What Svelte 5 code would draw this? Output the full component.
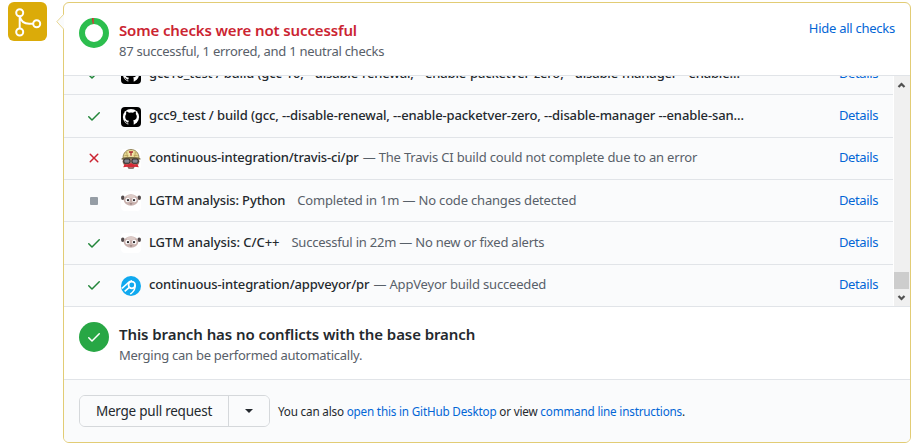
<script>
  const rows = [
    { state: 'ok', icon: 'github', title: 'gcc10_test / build (gcc-10, --disable-renewal, --enable-packetver-zero, --disable-manager --enable…', desc: '', cls: 'a' },
    { state: 'ok', icon: 'github', title: 'gcc9_test / build (gcc, --disable-renewal, --enable-packetver-zero, --disable-manager --enable-san…', desc: '', cls: 'b' },
    { state: 'bad', icon: 'travis', title: 'continuous-integration/travis-ci/pr', desc: '— The Travis CI build could not complete due to an error', cls: 'c' },
    { state: 'neutral', icon: 'lgtm', title: 'LGTM analysis: Python', desc: 'Completed in 1m — No code changes detected', cls: 'd' },
    { state: 'ok', icon: 'lgtm', title: 'LGTM analysis: C/C++', desc: 'Successful in 22m — No new or fixed alerts', cls: 'e' },
    { state: 'ok', icon: 'appveyor', title: 'continuous-integration/appveyor/pr', desc: '— AppVeyor build succeeded', cls: 'f' }
  ];
</script>

{#snippet check()}
  <svg width="16" height="16" viewBox="0 0 16 16"><path fill="currentColor" fill-rule="evenodd" d="M13.78 4.22a.75.75 0 010 1.06l-7.25 7.25a.75.75 0 01-1.06 0L2.22 9.28a.75.75 0 011.06-1.06L6 10.94l6.72-6.72a.75.75 0 011.06 0z" /></svg>
{/snippet}

{#snippet avatar(kind)}
  <svg class="avatar" width="20" height="20" viewBox="0 0 20 20">
    {#if kind === 'github'}
      <rect width="20" height="20" rx="4" fill="#000" />
      <circle cx="10" cy="10" r="8.1" fill="#fff" />
      <path d="M5.3 4.6c1.2 0 2.1.7 2.6 1.1a8 8 0 014.2 0c.5-.4 1.4-1.1 2.6-1.1.4 1 .3 1.8.1 2.3.7.8 1 1.600 1 2.600 0 2.700-1.600 3.600-3.700 3.900.4.4.6 1 .6 1.600v3H7.300v-1.700c-2 .4-2.500-.8-3.200-1.700-.3-.4-.6-.6-.9-.8 1.200-.3 1.800.6 2.300 1.200.5.6 1.100.6 1.900.3 0-.7.3-1.300.6-1.600-2.300-.3-3.800-1.300-3.800-4 0-1.100.4-2 1-2.700-.2-.6-.2-1.500.1-2.400z" fill="#000" />
    {:else if kind === 'travis'}
      <rect width="20" height="20" rx="3" fill="#fff" />
      <ellipse cx="10" cy="12.500" rx="8.500" ry="6" fill="#a98c78" />
      <path d="M2 9C2 4 5.500 .5 10 .5S18 4 18 9z" fill="#e3d590" stroke="#7d7041" stroke-width=".8" />
      <path d="M3.500 6.500h13M5.500 3l1 5M14.500 3l-1 5" stroke="#b19b54" stroke-width=".7" />
      <rect x="7.400" y="1.800" width="5.200" height="5.600" rx="1" fill="#f4e8aa" />
      <path d="M8 3h4M10 3v3.700" stroke="#a82a31" stroke-width="1.300" />
      <path d="M.6 9.200q9.400-2.400 18.800 0v1.500q-9.400-2-18.800 0z" fill="#756946" />
      <rect x="2.800" y="10" width="6.200" height="4.300" rx="1.500" fill="#858992" stroke="#302c2c" stroke-width="1.100" />
      <rect x="11" y="10" width="6.200" height="4.300" rx="1.500" fill="#858992" stroke="#302c2c" stroke-width="1.100" />
      <path d="M2.200 18.300l1.500-3.200q3.200 1.300 6.300-1 3.100 2.300 6.300 1l1.500 3.200-4-.6-1.500.8H7.700l-1.500-.8z" fill="#d52a36" />
      <path d="M6.500 18q3.500 1.500 7 0l-1 1.700h-5z" fill="#694f48" />
    {:else if kind === 'lgtm'}
      <rect width="20" height="20" rx="4" fill="#fff" />
      <ellipse cx="1.800" cy="6.800" rx="1.800" ry="2.200" fill="#534a4b" />
      <ellipse cx="18.200" cy="6.800" rx="1.800" ry="2.200" fill="#534a4b" />
      <ellipse cx="10" cy="9" rx="7.300" ry="5.800" fill="#c9b2ae" />
      <ellipse cx="10" cy="5.500" rx="4.500" ry="1.700" fill="#ddcbc7" />
      <circle cx="6.700" cy="9" r="2.300" fill="#fff" />
      <circle cx="13.300" cy="9" r="2.300" fill="#fff" />
      <circle cx="7" cy="9.100" r="1.200" fill="#2e292c" />
      <circle cx="13" cy="9.100" r="1.200" fill="#2e292c" />
      <path d="M8.500 12.600h3l-1.500 1.200z" fill="#806b69" />
    {:else}
      <circle cx="10" cy="10" r="10" fill="#10a9ef" />
      <circle cx="10.800" cy="9" r="3.300" fill="none" stroke="#fff" stroke-width="1.700" />
      <path d="M1 12.300L5.800 8C7.500 5.800 9 4.700 11 4.700M8.300 11.300L3.700 15.300M14 9c.6 3.700-1.300 6.700-4.700 9.200" fill="none" stroke="#fff" stroke-width="1.600" />
    {/if}
  </svg>
{/snippet}

<div class="page">
  <div class="badge">
    <svg width="39" height="39" viewBox="0 0 39 39" fill="none" stroke="#fff" stroke-width="2">
      <circle cx="11.700" cy="10.700" r="3.500" /><circle cx="11.700" cy="30" r="3.500" /><circle cx="28.700" cy="21.700" r="3.500" />
      <path d="M11.700 14.200v12.300M11.700 14.200c1.200 5 5 7.500 9.500 7.500h4" />
    </svg>
  </div>
  <div class="card">
    <svg class="notch" width="8" height="16" viewBox="0 0 8 16"><path d="M8 0L.8 7.700 8 15.500" fill="#fafbfc" stroke="#e9d793" /></svg>
    <section class="head">
      <svg class="donut" width="30" height="30" viewBox="0 0 30 30">
        <circle cx="15" cy="15" r="12" fill="none" stroke="#2cbe4e" stroke-width="6" />
        <path d="M12.900 .15L13.800 6.100 15 6V0z" fill="#a3804a" /><path d="M13 .15L13.900 6.100 14.500 6V0z" fill="#cb2431" />
      </svg>
      <div class="copy">
        <h3 class="red">Some checks were not successful</h3>
        <p>87 successful, 1 errored, and 1 neutral checks</p>
      </div>
      <a class="hide" href="#top">Hide all checks</a>
    </section>
    <section class="checks">
      <div class="list">
        {#each rows as r}
          <div class="row {r.cls}">
            <span class="state {r.state}">
              {#if r.state === 'ok'}{@render check()}
              {:else if r.state === 'bad'}<svg width="16" height="16" viewBox="0 0 16 16"><path fill="currentColor" d="M3.720 3.720a.75.75 0 011.060 0L8 6.940l3.220-3.220a.75.75 0 111.060 1.060L9.060 8l3.220 3.220a.75.75 0 11-1.060 1.060L8 9.060l-3.220 3.220a.75.75 0 01-1.060-1.060L6.940 8 3.720 4.780a.75.75 0 010-1.060z" /></svg>
              {:else}<i></i>{/if}
            </span>
            {@render avatar(r.icon)}
            <strong>{r.title}</strong>
            {#if r.desc}<span class="desc">{r.desc}</span>{/if}
            <a class="details" href="#details">Details</a>
          </div>
        {/each}
      </div>
      <div class="bar">
        <svg width="16" height="17" viewBox="0 0 16 17"><path d="M4.500 11L7.500 8l3 3" fill="none" stroke="#505050" stroke-width="2.200" /></svg>
        <div class="track"><div class="thumb"></div></div>
        <svg width="16" height="17" viewBox="0 0 16 17"><path d="M4.500 7L7.500 10l3-3" fill="none" stroke="#505050" stroke-width="2.200" /></svg>
      </div>
    </section>
    <section class="clean">
      <span class="disc">{@render check()}</span>
      <div class="copy">
        <h3>This branch has no conflicts with the base branch</h3>
        <p>Merging can be performed automatically.</p>
      </div>
    </section>
    <section class="foot">
      <div class="group">
        <button class="merge">Merge pull request</button>
        <button class="drop" aria-label="Select merge method"><i></i></button>
      </div>
      <span class="also">You can also <a href="#desktop">open this in GitHub Desktop</a> or view <a href="#cli">command line instructions</a>.</span>
    </section>
  </div>
</div>

<style>
  :global(body) { background: #fff; }
  .page { box-sizing: border-box; width: 919px; height: 448px; padding: 2px 8px 5px; display: flex; gap: 16px; font: 13px/20px "Noto Sans", "Open Sans", sans-serif; color: #24292e; overflow: hidden; }
  .page * { box-sizing: border-box; }
  svg { display: block; flex: none; }
  a { color: #0366d6; text-decoration: none; }
  .badge { width: 39px; height: 39px; border-radius: 6px; background: #dbab09; }
  .card { position: relative; width: 848px; height: 441px; border: 1px solid #e2cc75; border-radius: 6px; display: flex; flex-direction: column; }
  .notch { position: absolute; left: -8px; top: 11px; }
  section { display: flex; flex: none; white-space: nowrap; }
  .head { height: 73px; border-bottom: 1px solid #e1e4e8; padding: 15px 15px 0; }
  .copy { flex: 1; margin-left: 10px; }
  h3 { margin: 2px 0 0; font-size: 15px; line-height: 21px; font-weight: 600; letter-spacing: -.08px; }
  p { margin: 0; line-height: 20px; color: #586069; letter-spacing: -.26px; }
  .red { color: #cb2431; letter-spacing: -.13px; }
  .hide { letter-spacing: -.26px; }
  .checks { height: 231px; border-bottom: 1px solid #e1e4e8; background: #fafbfc; }
  .list { width: 830px; height: 230px; border-right: 1px solid #fff; overflow: hidden; display: flex; flex-direction: column; justify-content: flex-end; }
  .row { height: 42px; flex: none; border-bottom: 1px solid #e1e4e8; display: flex; align-items: center; padding: 0 15px 0 22px; }
  .row.b, .row.e { height: 43px; }
  .row.c, .row.f { padding-bottom: 1px; }
  .row.f { height: 41px; border: 0; }
  .state { width: 16px; height: 16px; margin-right: 19px; display: flex; align-items: center; justify-content: center; }
  .b .avatar, .c .avatar, .f .avatar { margin-top: 2px; }
  .ok { color: #22863a; }
  .bad { color: #cb2431; }
  .neutral i { width: 8px; height: 8px; border-radius: 1px; background: #959da5; }
  strong { margin-left: 8px; font-weight: 500; letter-spacing: -.12px; }
  .a strong { letter-spacing: -.165px; }
  .c strong { letter-spacing: -.16px; }
  .d strong { letter-spacing: -.14px; }
  .e strong { letter-spacing: -.06px; }
  .desc { color: #586069; margin-left: 4px; letter-spacing: -.18px; }
  .d .desc, .e .desc { margin-left: 12px; }
  .e .desc { letter-spacing: -.22px; }
  strong, .desc, .details { padding-bottom: 2px; }
  .d strong, .d .desc, .d .details { padding-bottom: 1px; }
  .details { margin-left: auto; letter-spacing: -.38px; }
  .bar { width: 16px; background: #f0f0f0; display: flex; flex-direction: column; }
  .track { flex: 1; display: flex; align-items: flex-end; }
  .thumb { width: 15px; height: 17px; background: #cdcdcd; }
  .clean { height: 73px; border-bottom: 1px solid #e1e4e8; padding: 15px 15px 0; }
  .disc { width: 30px; height: 30px; border-radius: 50%; background: #28a745; color: #fff; display: flex; align-items: center; justify-content: center; }
  .foot { flex: 1; background: #fafbfc; border-radius: 0 0 5px 5px; padding: 15px 15px 0; }
  .group { display: flex; width: 191px; height: 32px; border: 1px solid #d5d8db; border-radius: 6px; overflow: hidden; }
  button { background: #fafbfc; border: 0; padding: 0; font: 13.5px/20px "Noto Sans", sans-serif; letter-spacing: -.24px; color: #24292e; }
  .merge { width: 149px; border-right: 1px solid #d5d8db; }
  .drop { flex: 1; display: flex; align-items: center; justify-content: center; }
  .drop i { border: 4px solid transparent; border-top-color: #24292e; border-bottom: 0; }
  .also { margin-left: 8px; line-height: 33px; font-size: 11.7px; letter-spacing: -.185px; }
</style>
